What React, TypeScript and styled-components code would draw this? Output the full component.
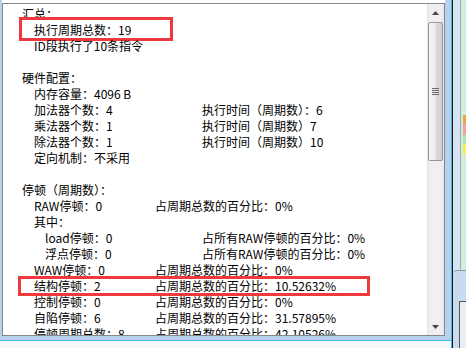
import React from "react";
import styled, { createGlobalStyle } from "styled-components";

const Global = createGlobalStyle`
  html, body { margin: 0; padding: 0; background: #fff; }
  body { width: 466px; height: 348px; overflow: hidden; }
`;

const Page = styled.div`
  width: 466px;
  height: 348px;
  display: flex;
  overflow: hidden;
  background: #fff;
`;

const Workspace = styled.div`
  width: 451px;
  display: flex;
  flex-direction: column;
`;

const Frame = styled.div`
  height: 340px;
  background: #b9d1ea;
  padding-left: 2px;
  display: flex;
  box-sizing: border-box;
`;

const BoxColumn = styled.div`
  width: 443px;
  display: flex;
  flex-direction: column;
`;

const TopStrip = styled.div`
  height: 3px;
  background: #fff;
`;

const TextBox = styled.div`
  height: 333px;
  box-sizing: border-box;
  border: 1px solid #828790;
  background: #fff;
  display: flex;
`;

const BottomEdge = styled.div`
  height: 1px;
  background: #3fb8ea;
`;

const BottomRest = styled.div`
  flex: 1;
  background: #f7f9fc;
`;

const Divider = styled.div`
  width: 2px;
  display: flex;
`;

const DividerLine = styled.div<{ $color: string }>`
  width: 1px;
  background: ${(p) => p.$color};
`;

const SidePanel = styled.div`
  flex: 1;
  display: flex;
  flex-direction: column;
  background: #d3e3f3;
`;

const SideTop = styled.div`
  height: 270px;
  display: flex;
`;

const SideBlue = styled.div`
  width: 7px;
  background: #d6e4f3;
`;

const SideGreen = styled.div`
  flex: 1;
  border-left: 1px solid #9aa9b6;
  background: #d5ecd8;
  display: flex;
  flex-direction: column;
  padding-top: 115px;
  align-items: flex-end;
`;

const Mark = styled.div<{ $color: string; $h: number }>`
  width: 3px;
  height: ${(p) => p.$h}px;
  background: ${(p) => p.$color};
`;

const SideBottom = styled.div`
  flex: 1;
  background: #c8dbef;
  border-top: 1px solid #8e9aa6;
  border-top-left-radius: 4px;
  display: flex;
  flex-direction: column;
  padding: 30px 0 0 6px;
`;

const SideInner = styled.div`
  flex: 1;
  border-left: 1px solid #555;
  border-top: 1px solid #555;
  background: #e9eef4;
`;

const Content = styled.div`
  flex: 1;
  overflow: hidden;
  padding: 2px 0 0 19px;
  font-family: "Noto Sans CJK SC", "Noto Sans CJK JP", sans-serif;
  font-size: 12px;
  line-height: 16px;
  color: #000;
`;

const Row = styled.div<{ $x: number; $col?: number }>`
  position: relative;
  height: 16px;
  white-space: nowrap;
  padding-left: ${(p) => p.$x - 22}px;
  display: grid;
  grid-template-columns: ${(p) => (p.$col ? `${p.$col - p.$x}px auto` : "auto")};
`;

const Cell = styled.span``;

const Highlight = styled.span<{ $l: number; $t: number; $w: number; $h: number }>`
  position: absolute;
  left: ${(p) => p.$l}px;
  top: ${(p) => p.$t}px;
  width: ${(p) => p.$w}px;
  height: ${(p) => p.$h}px;
  box-sizing: border-box;
  border: 3px solid #ee3a3c;
  pointer-events: none;
`;

const ScrollBar = styled.div`
  width: 17px;
  display: flex;
  flex-direction: column;
  background: linear-gradient(to right, #e2e2e2, #efefef 2px, #f0f0f0 14px, #e6e6e6);
`;

const ArrowButton = styled.div`
  height: 17px;
  display: flex;
  align-items: center;
  justify-content: center;
`;

const Track = styled.div`
  flex: 1;
  padding: 1px 1px 0 1px;
`;

const Thumb = styled.div`
  height: 139px;
  box-sizing: border-box;
  border: 1px solid #979797;
  border-radius: 2px;
  background: linear-gradient(to right, #f6f6f6, #ececec 45%, #dcdcdc 55%, #cfcfcf);
  display: flex;
  align-items: center;
  justify-content: center;
`;

const Arrow = ({ up }: { up?: boolean }) => (
  <svg width="7" height="4" viewBox="0 0 7 4">
    <path d={up ? "M0 4 L3.5 0 L7 4 Z" : "M0 0 L3.5 4 L7 0 Z"} fill="#4a4a4a" />
  </svg>
);

const Grip = () => (
  <svg width="7" height="7" viewBox="0 0 7 7">
    {[0, 2, 4, 6].map((y) => (
      <rect key={y} x="0" y={y} width="7" height="1" fill="#6b6b6b" />
    ))}
  </svg>
);

type Line = {
  x?: number;
  a?: string;
  col?: number;
  b?: string;
  hl?: { l: number; t: number; w: number; h: number };
};

const lines: Line[] = [
  { x: 22, a: "汇总：" },
  { x: 34, a: "执行周期总数：19", hl: { l: -3, t: -5, w: 154, h: 24 } },
  { x: 34, a: "ID段执行了10条指令" },
  {},
  { x: 22, a: "硬件配置：" },
  { x: 34, a: "内存容量：4096 B" },
  { x: 34, a: "加法器个数：4", col: 202, b: "执行时间（周期数）：6" },
  { x: 34, a: "乘法器个数：1", col: 202, b: "执行时间（周期数）7" },
  { x: 34, a: "除法器个数：1", col: 202, b: "执行时间（周期数）10" },
  { x: 34, a: "定向机制：不采用" },
  {},
  { x: 22, a: "停顿（周期数）：" },
  { x: 34, a: "RAW停顿：0", col: 155, b: "占周期总数的百分比：0%" },
  { x: 34, a: "其中：" },
  { x: 45, a: "load停顿：0", col: 202, b: "占所有RAW停顿的百分比：0%" },
  { x: 45, a: "浮点停顿：0", col: 202, b: "占所有RAW停顿的百分比：0%" },
  { x: 34, a: "WAW停顿：0", col: 155, b: "占周期总数的百分比：0%" },
  {
    x: 34,
    a: "结构停顿：2",
    col: 155,
    b: "占周期总数的百分比：10.52632%",
    hl: { l: -4, t: -2, w: 352, h: 20 },
  },
  { x: 34, a: "控制停顿：0", col: 155, b: "占周期总数的百分比：0%" },
  { x: 34, a: "自陷停顿：6", col: 155, b: "占周期总数的百分比：31.57895%" },
  { x: 34, a: "停顿周期总数：8", col: 155, b: "占周期总数的百分比：42.10526%" },
];

export default function App() {
  return (
    <>
      <Global />
      <Page>
        <Workspace>
          <Frame>
            <BoxColumn>
              <TopStrip />
              <TextBox>
                <Content>
                  {lines.map((l, i) => (
                    <Row key={i} $x={l.x ?? 22} $col={l.col}>
                      <Cell>{l.a ?? ""}</Cell>
                      {l.b && <Cell>{l.b}</Cell>}
                      {l.hl && <Highlight $l={l.hl.l} $t={l.hl.t} $w={l.hl.w} $h={l.hl.h} />}
                    </Row>
                  ))}
                </Content>
                <ScrollBar>
                  <ArrowButton>
                    <Arrow up />
                  </ArrowButton>
                  <Track>
                    <Thumb>
                      <Grip />
                    </Thumb>
                  </Track>
                  <ArrowButton>
                    <Arrow />
                  </ArrowButton>
                </ScrollBar>
              </TextBox>
            </BoxColumn>
          </Frame>
          <BottomEdge />
          <BottomRest />
        </Workspace>
        <Divider>
          <DividerLine $color="#3fb8ea" />
          <DividerLine $color="#1b1b1b" />
        </Divider>
        <SidePanel>
          <SideTop>
            <SideBlue />
            <SideGreen>
              <Mark $color="#f4a23a" $h={8} />
              <Mark $color="#f2a0a8" $h={12} />
              <Mark $color="#a9e6b0" $h={9} />
              <Mark $color="#f5ee5a" $h={10} />
            </SideGreen>
          </SideTop>
          <SideBottom>
            <SideInner />
          </SideBottom>
        </SidePanel>
      </Page>
    </>
  );
}
